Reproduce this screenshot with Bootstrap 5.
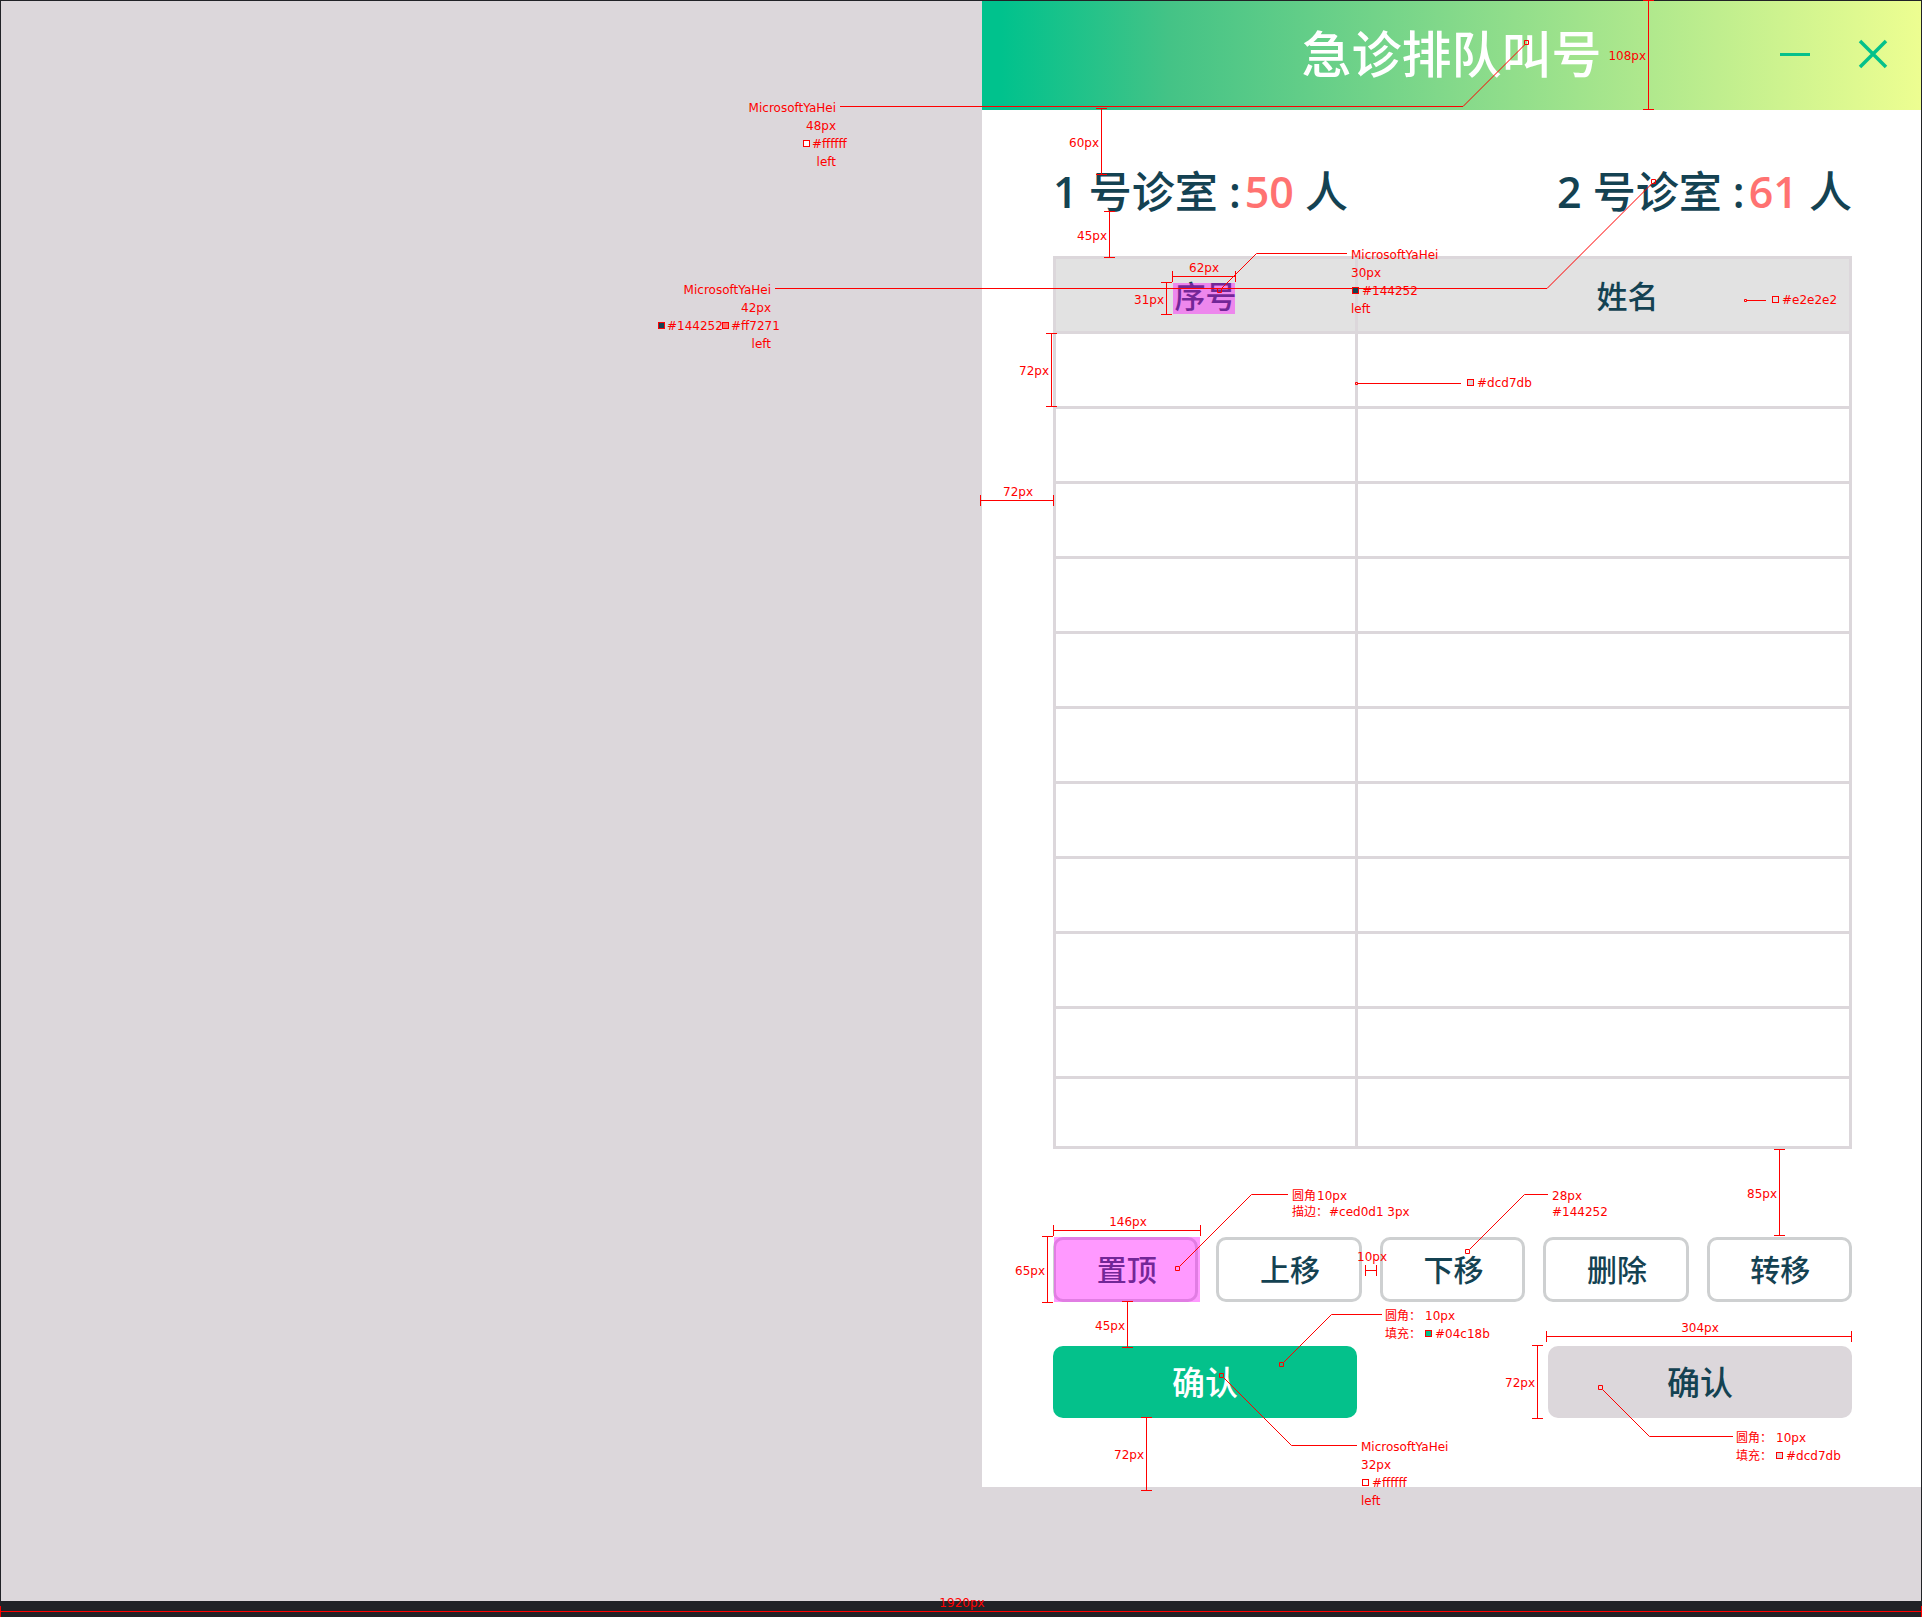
<!DOCTYPE html>
<html lang="zh-CN">
<head>
<meta charset="utf-8">
<meta name="viewport" content="width=device-width, initial-scale=1">
<title>急诊排队叫号</title>
<link href="https://cdn.jsdelivr.net/npm/bootstrap@5.3.0/dist/css/bootstrap.min.css" rel="stylesheet">
<style>
  :root { --ink: #144252; --green: #04c18b; --line: #dcd7db; --coral: #ff7271; }
  body { background: #212226; color: var(--ink); font-family: "Open Sans", "Noto Sans CJK SC", sans-serif; font-weight: 500; }
  .board { background: var(--line); margin: 0 1px 16px; border-top: 1px solid #212226; padding-bottom: 114px; }
  .call-panel { width: 939px; }
  .title-bar { height: 109px; padding: 0 33px 3px; background: linear-gradient(90deg, #00c28d 0, #00c28d 2%, #44c386 20%, #edfe91 100%); }
  .title-bar h1 { font-size: 50px; line-height: 72px; font-weight: 500; }
  .win-btn { width: 30px; height: 30px; color: var(--green); }
  .window-tools { gap: 48px; }
  .panel-body { padding: 49px 69px 69px 71px; }
  .rooms { font-size: 43px; line-height: 66px; margin-bottom: 31px; }
  .rooms strong { font-weight: 600; }
  .rooms .count { color: var(--coral); padding-left: 4px; }
  .queue { table-layout: fixed; border-collapse: collapse; width: 100%; }
  .queue th, .queue td { border: 3px solid var(--line); height: 75px; padding: 0; }
  .queue th { background: #e2e2e2; font-size: 31px; line-height: 44px; font-weight: 500; text-align: center; padding-top: 2px; }
  .queue .col-no { width: 302px; }
  .queue .short td { height: 70px; }
  .actions { margin-top: 88px; gap: 18px; }
  .btn-step { --bs-btn-color: var(--ink); --bs-btn-border-color: #ced0d1; --bs-btn-border-width: 3px; --bs-btn-border-radius: 10px; --bs-btn-bg: #fff; font-size: 30px; font-weight: 500; line-height: 44px; height: 65px; padding: 0 0 0 2px; }
  .confirms { margin-top: 44px; }
  .btn-confirm { --bs-btn-border-radius: 10px; --bs-btn-border-width: 0; width: 304px; height: 72px; font-size: 33px; font-weight: 500; line-height: 48px; padding: 2px 0 0; }
  .btn-go { --bs-btn-bg: var(--green); --bs-btn-color: #fff; }
  .btn-idle { --bs-btn-bg: var(--line); --bs-btn-color: var(--ink); }
  .notes { width: 1922px; height: 1617px; top: 0; right: 0; pointer-events: none; }
  .notes text { fill: red; font: 400 12px "DejaVu Sans", "Noto Sans CJK SC", sans-serif; }
  .notes .end { text-anchor: end; }
  .notes .mid { text-anchor: middle; }
  .notes .rules, .notes .leads, .notes .swatches { stroke: red; fill: none; }
  .notes .rules { shape-rendering: crispEdges; }
</style>
</head>
<body class="position-relative d-flex flex-column min-vh-100 overflow-x-hidden">
<main class="board d-flex justify-content-end">
  <section class="call-panel bg-white">
    <header class="title-bar d-flex align-items-center">
      <div class="flex-fill w-25"></div>
      <h1 class="text-white text-nowrap m-0">急诊排队叫号</h1>
      <div class="window-tools flex-fill w-25 d-flex justify-content-end">
        <button type="button" class="win-btn btn border-0 p-0 d-flex" aria-label="最小化">
          <svg width="30" height="30" fill="none" stroke="currentColor" stroke-width="3"><path d="M0 15.500H30"/></svg>
        </button>
        <button type="button" class="win-btn btn border-0 p-0 d-flex" aria-label="关闭">
          <svg width="30" height="30" fill="none" stroke="currentColor" stroke-width="3.500"><path d="M2 2 28 28M28 2 2 28"/></svg>
        </button>
      </div>
    </header>

    <div class="panel-body">
      <div class="rooms d-flex justify-content-between text-nowrap">
        <div><strong>1</strong> 号诊室 <strong>:</strong><strong class="count">50</strong> 人</div>
        <div><strong>2</strong> 号诊室 <strong>:</strong><strong class="count">61</strong> 人</div>
      </div>

      <table class="queue">
        <thead><tr><th class="col-no" scope="col">序号</th><th class="ps-5" scope="col">姓名</th></tr></thead>
        <tbody>
          <tr><td></td><td></td></tr>
          <tr><td></td><td></td></tr>
          <tr><td></td><td></td></tr>
          <tr><td></td><td></td></tr>
          <tr><td></td><td></td></tr>
          <tr><td></td><td></td></tr>
          <tr><td></td><td></td></tr>
          <tr><td></td><td></td></tr>
          <tr><td></td><td></td></tr>
          <tr class="short"><td></td><td></td></tr>
          <tr class="short"><td></td><td></td></tr>
        </tbody>
      </table>

      <div class="actions d-flex">
        <button type="button" class="btn btn-step flex-fill">置顶</button>
        <button type="button" class="btn btn-step flex-fill">上移</button>
        <button type="button" class="btn btn-step flex-fill">下移</button>
        <button type="button" class="btn btn-step flex-fill">删除</button>
        <button type="button" class="btn btn-step flex-fill">转移</button>
      </div>
      <div class="confirms d-flex justify-content-between">
        <button type="button" class="btn btn-confirm btn-go">确认</button>
        <button type="button" class="btn btn-confirm btn-idle">确认</button>
      </div>
    </div>
  </section>
</main>

<!-- Design annotations laid over the page -->
<svg class="notes position-absolute" viewBox="0 0 1922 1617">
  <g fill="#f0f" fill-opacity=".4">
    <rect x="1173" y="283" width="62" height="31"/>
    <rect x="1054" y="1237" width="146" height="65"/>
  </g>
  <!-- dimension rules -->
  <g class="rules">
    <path d="M1648.500 0V109M1643 .5h11M1643 109.500h11"/>
    <path d="M1101.500 108V174M1096 108.500h11M1096 174.500h11"/>
    <path d="M1109.500 211V257M1104 211.500h11M1104 257.500h11"/>
    <path d="M1172 276.500H1235M1172.500 271v11M1235.500 271v11"/>
    <path d="M1166.500 282V314M1161 282.500h11M1161 314.500h11"/>
    <path d="M1051.500 333V406M1046 333.500h11M1046 406.500h11"/>
    <path d="M980 500.500H1053M980.500 495v11M1053.500 495v11"/>
    <path d="M1779.500 1149V1235M1774 1149.500h11M1774 1235.500h11"/>
    <path d="M1053 1230.500H1200M1053.500 1225v11M1200.500 1225v11"/>
    <path d="M1047.500 1236V1302M1042 1236.500h11M1042 1302.500h11"/>
    <path d="M1127.500 1301V1347M1122 1301.500h11M1122 1347.500h11"/>
    <path d="M1365 1270.500H1376M1365.500 1265v11M1376.500 1265v11"/>
    <path d="M1546 1336.500H1851M1546.500 1331v11M1851.500 1331v11"/>
    <path d="M1537.500 1345V1418M1532 1345.500h11M1532 1418.500h11"/>
    <path d="M1146.500 1417V1490M1141 1417.500h11M1141 1490.500h11"/>
    <path d="M0 1611.500H1922M.5 1606v11M1921.500 1606v11"/>
  </g>
  <!-- leader lines -->
  <g class="leads">
    <path d="M840 106.500H1463L1524.500 45"/>
    <path d="M775 288.500H1547L1651.500 184"/>
    <path d="M1347 253.500H1256.500L1222 288"/>
    <path d="M1747 300.500H1766M1358 383.500H1461"/>
    <path d="M1288 1194.500H1251.500L1180 1266"/>
    <path d="M1548 1194.500H1524.500L1470 1249"/>
    <path d="M1382 1314.500H1331.500L1284 1362"/>
    <path d="M1733 1436.500H1649.500L1603 1390"/>
    <path d="M1357 1445.500H1291.500L1224 1378"/>
  </g>
  <g class="swatches">
    <path d="M1524.500 40.500h4v4h-4zM1651.500 179.500h4v4h-4zM1217.500 288.500h4v4h-4zM1175.500 1266.500h4v4h-4zM1465.500 1249.500h4v4h-4zM1279.500 1362.500h4v4h-4zM1598.500 1385.500h4v4h-4zM1219.500 1373.500h4v4h-4zM1744.500 299.500h2v2h-2zM1355.500 382.500h2v2h-2z"/>
    <rect x="803.500" y="140.500" width="6" height="6" fill="#fff"/>
    <rect x="658.500" y="322.500" width="6" height="6" fill="#144252"/>
    <rect x="722.500" y="322.500" width="6" height="6" fill="#ff7271"/>
    <rect x="1352.500" y="287.500" width="6" height="6" fill="#144252"/>
    <rect x="1772.500" y="296.500" width="6" height="6" fill="#e2e2e2"/>
    <rect x="1467.500" y="379.500" width="6" height="6" fill="#dcd7db"/>
    <rect x="1425.500" y="1330.500" width="6" height="6" fill="#04c18b"/>
    <rect x="1776.500" y="1452.500" width="6" height="6" fill="#dcd7db"/>
    <rect x="1362.500" y="1479.500" width="6" height="6" fill="#fff"/>
  </g>
  <g>
    <text class="end" x="836" y="112">MicrosoftYaHei</text><text class="end" x="836" y="130">48px</text><text x="812" y="148">#ffffff</text><text class="end" x="836" y="166">left</text>
    <text class="end" x="771" y="294">MicrosoftYaHei</text><text class="end" x="771" y="312">42px</text><text x="667" y="330">#144252</text><text x="731" y="330">#ff7271</text><text class="end" x="771" y="348">left</text>
    <text x="1351" y="259">MicrosoftYaHei</text><text x="1351" y="277">30px</text><text x="1362" y="295">#144252</text><text x="1351" y="313">left</text>
    <text x="1782" y="304">#e2e2e2</text>
    <text x="1477" y="387">#dcd7db</text>
    <text class="end" x="1646" y="60">108px</text>
    <text class="end" x="1099" y="147">60px</text>
    <text class="end" x="1107" y="240">45px</text>
    <text class="mid" x="1204" y="272">62px</text>
    <text class="end" x="1164" y="304">31px</text>
    <text class="end" x="1049" y="375">72px</text>
    <text class="mid" x="1018" y="496">72px</text>
    <text class="end" x="1777" y="1198">85px</text>
    <text class="mid" x="1128" y="1226">146px</text>
    <text class="end" x="1045" y="1275">65px</text>
    <text class="end" x="1125" y="1330">45px</text>
    <text class="mid" x="1372" y="1261">10px</text>
    <text class="mid" x="1700" y="1332">304px</text>
    <text class="end" x="1535" y="1387">72px</text>
    <text class="end" x="1144" y="1459">72px</text>
    <text class="mid" x="962" y="1607">1920px</text>
    <text x="1292" y="1200">圆角</text><text x="1317" y="1200">10px</text><text x="1292" y="1216">描边：</text><text x="1329" y="1216">#ced0d1 3px</text>
    <text x="1552" y="1200">28px</text><text x="1552" y="1216">#144252</text>
    <text x="1385" y="1320">圆角：</text><text x="1425" y="1320">10px</text><text x="1385" y="1338">填充：</text><text x="1435" y="1338">#04c18b</text>
    <text x="1736" y="1442">圆角：</text><text x="1776" y="1442">10px</text><text x="1736" y="1460">填充：</text><text x="1786" y="1460">#dcd7db</text>
    <text x="1361" y="1451">MicrosoftYaHei</text><text x="1361" y="1469">32px</text><text x="1372" y="1487">#ffffff</text><text x="1361" y="1505">left</text>
  </g>
</svg>
<script src="https://cdn.jsdelivr.net/npm/bootstrap@5.3.0/dist/js/bootstrap.bundle.min.js"></script>
</body>
</html>
